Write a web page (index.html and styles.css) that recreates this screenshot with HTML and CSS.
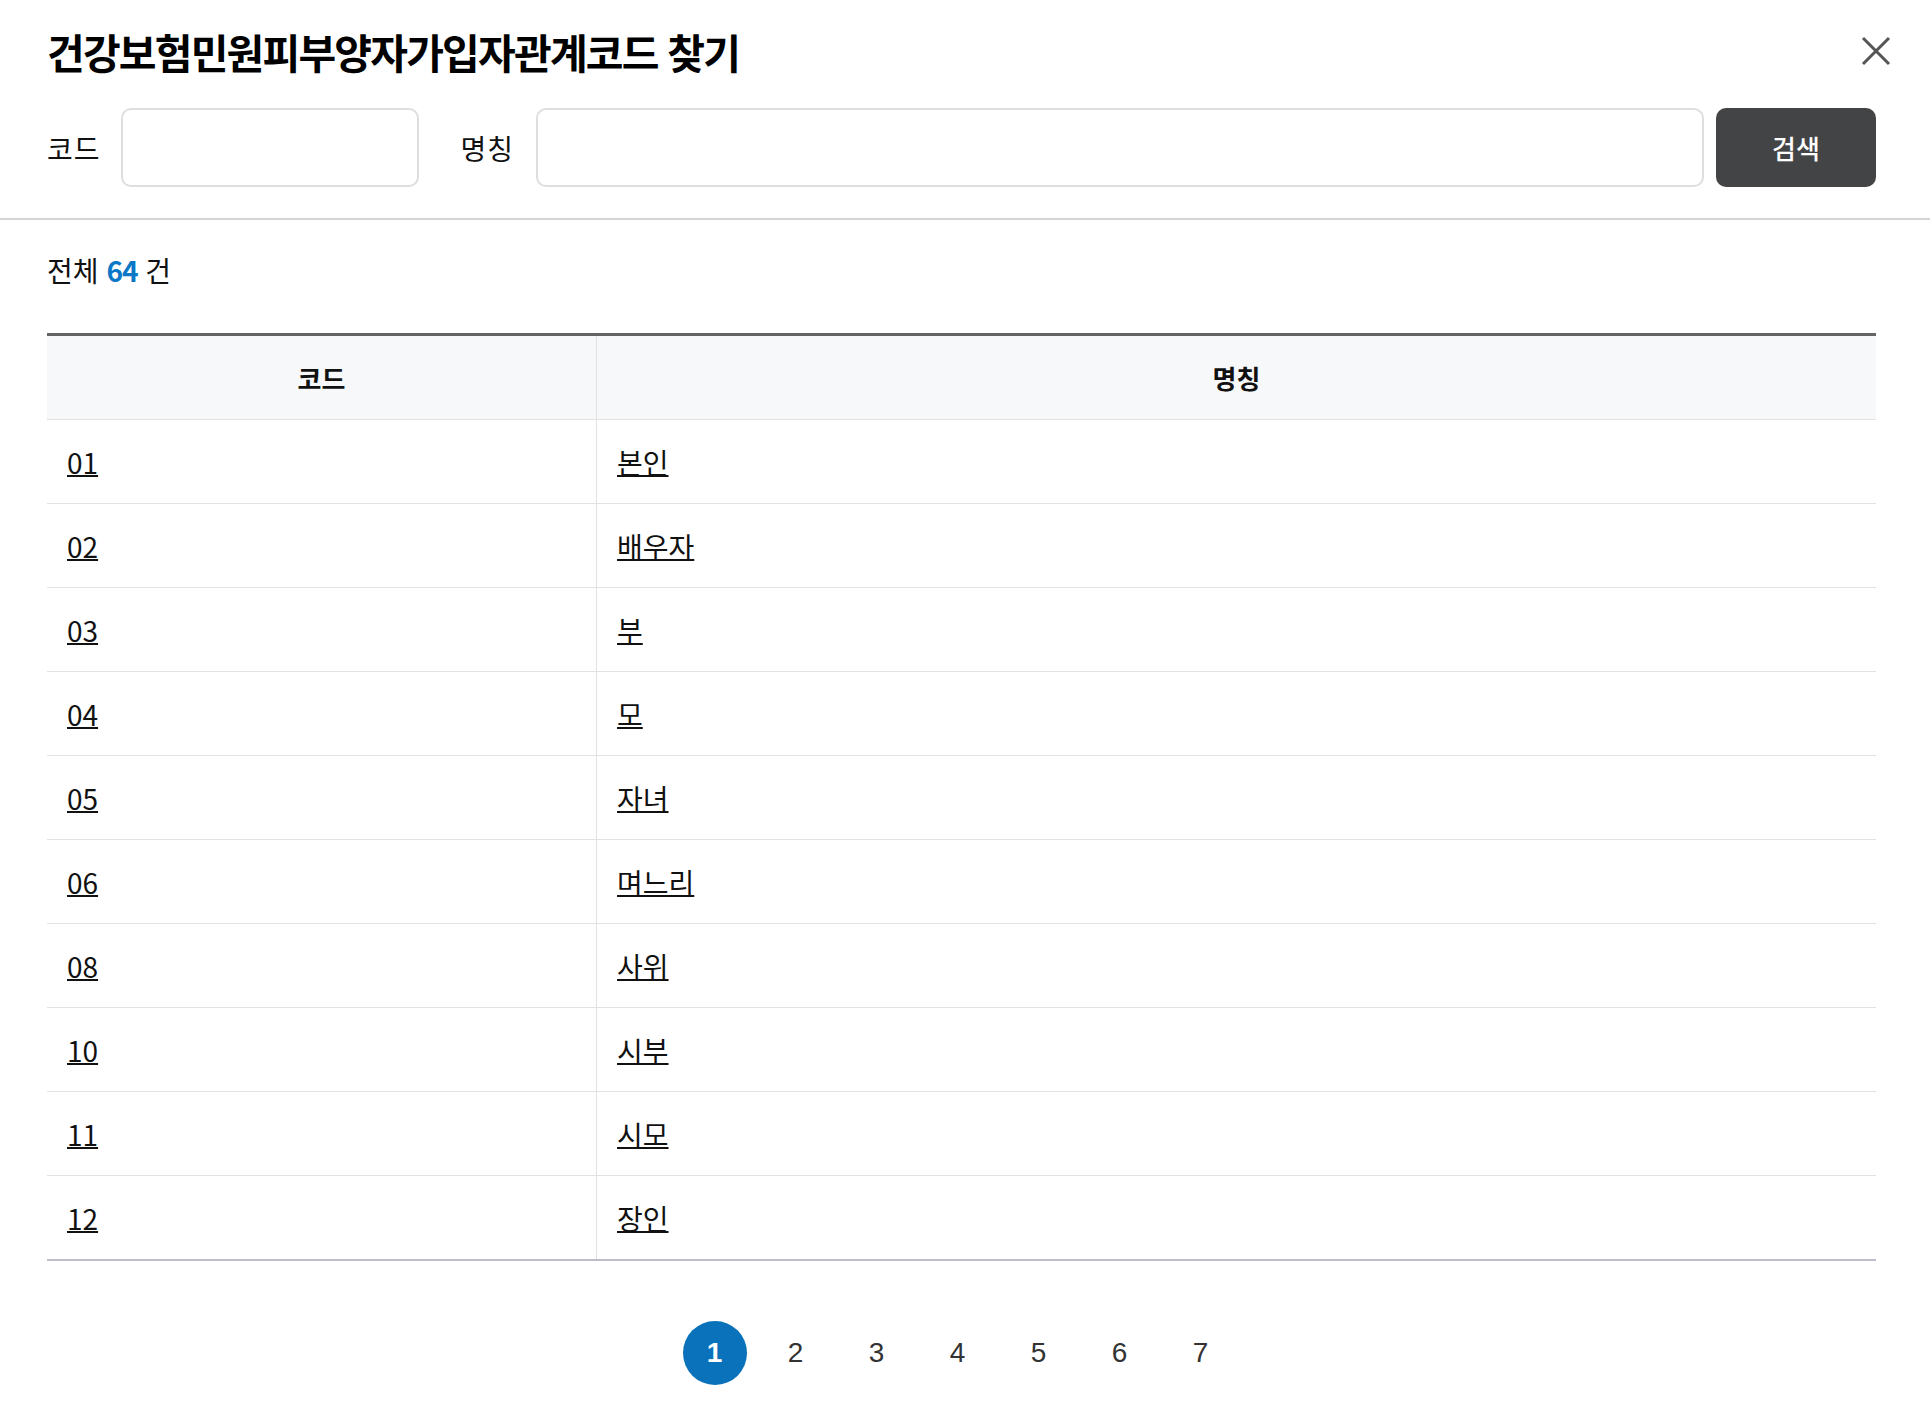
FILE: index.html
```html
<!DOCTYPE html>
<html lang="ko">
<head>
  <meta charset="UTF-8" />
  <title>건강보험민원피부양자가입자관계코드 찾기</title>
  <link rel="stylesheet" href="styles.css">
</head>
<body>

  <!-- 팝업 상단: 제목 + 검색 -->
  <div class="popup-head">
    <h1 class="popup-title">건강보험민원피부양자가입자관계코드 찾기</h1>
    <button class="close-btn" type="button" aria-label="닫기">
      <svg width="30" height="30" viewBox="0 0 30 30">
        <path d="M2 2 L28 28 M28 2 L2 28" stroke="#555" stroke-width="3" fill="none" />
      </svg>
    </button>

    <form class="search-row" onsubmit="return false;">
      <label class="search-label" for="code-input">코드</label>
      <input class="search-input code" id="code-input" type="text" />
      <label class="search-label name-label" for="name-input">명칭</label>
      <input class="search-input name" id="name-input" type="text" />
      <button class="search-btn" type="submit">검색</button>
    </form>
  </div>

  <!-- 결과 목록 -->
  <div class="popup-body">
    <p class="total">전체 <strong>64</strong> 건</p>

    <table class="code-table">
      <thead>
        <tr>
          <th class="col-code">코드</th>
          <th>명칭</th>
        </tr>
      </thead>
      <tbody id="code-list"></tbody>
    </table>

    <div class="paging">
      <a href="#" class="page on">1</a>
      <a href="#" class="page">2</a>
      <a href="#" class="page">3</a>
      <a href="#" class="page">4</a>
      <a href="#" class="page">5</a>
      <a href="#" class="page">6</a>
      <a href="#" class="page">7</a>
    </div>
  </div>

  <script>
    const codes = [
      ['01', '본인'],
      ['02', '배우자'],
      ['03', '부'],
      ['04', '모'],
      ['05', '자녀'],
      ['06', '며느리'],
      ['08', '사위'],
      ['10', '시부'],
      ['11', '시모'],
      ['12', '장인']
    ];

    const codeList = document.getElementById('code-list');

    codes.forEach(([code, name]) => {
      const tr = document.createElement('tr');
      tr.innerHTML = '<td><a href="#">' + code + '</a></td><td><a href="#">' + name + '</a></td>';
      codeList.appendChild(tr);
    });
  </script>

</body>
</html>
```

FILE: styles.css
```css
body {
  margin: 0;
  background-color: #fff;
  color: #111;
  font-family: "Noto Sans CJK KR", "Noto Sans", sans-serif;
}

.popup-head {
  position: relative;
  padding: 25px 54px 31px 47px;
  border-bottom: 2px solid #d4d4d4;
}

.popup-title {
  margin: 0;
  font-size: 41px;
  line-height: 52px;
  font-weight: 700;
  letter-spacing: -1.8px;
  color: #000;
}

/* 닫기 버튼 (우측 상단) */
.close-btn {
  position: absolute;
  top: 36px;
  right: 39px;
  width: 30px;
  height: 30px;
  padding: 0;
  border: none;
  background: transparent;
  cursor: pointer;
}

.close-btn svg {
  display: block;
}

.search-row {
  display: flex;
  align-items: center;
  margin-top: 31px;
}

.search-label {
  font-size: 28px;
  letter-spacing: 1px;
  margin-right: 20px;
}

.name-label {
  margin-left: 42px;
  margin-right: 22px;
}

.search-input {
  height: 79px;
  box-sizing: border-box;
  border: 2px solid #dedede;
  border-radius: 10px;
  font-size: 26px;
  padding: 0 16px;
  outline: none;
}

.search-input.code {
  width: 298px;
}

.search-input.name {
  flex: 1;
}

.search-btn {
  margin-left: 12px;
  width: 160px;
  height: 79px;
  border: none;
  border-radius: 10px;
  background-color: #434446;
  color: #fff;
  font-family: inherit;
  font-size: 26px;
  font-weight: 500;
  cursor: pointer;
}

.popup-body {
  padding: 0 54px 0 47px;
}

.total {
  margin: 32px 0 45px;
  font-size: 28px;
  line-height: 36px;
}

.total strong {
  color: #0a78c6;
  font-weight: 700;
  letter-spacing: -1px;
}

.code-table {
  width: 100%;
  border-collapse: collapse;
  border-top: 3px solid #646464;
  border-bottom: 2px solid #bcbdc8;
}

.code-table th,
.code-table td {
  height: 83px;
  padding: 0 20px;
  font-size: 28px;
  border-bottom: 1px solid #e2e2e2;
}

.code-table th {
  background-color: #f7f8fa;
  font-size: 26px;
  font-weight: 700;
  text-align: center;
}

.code-table td {
  text-align: left;
}

.code-table th:first-child,
.code-table td:first-child {
  width: 509px;
  border-right: 1px solid #e2e2e2;
}

.code-table td a {
  color: #111;
  text-decoration: underline;
  text-decoration-thickness: 2px;
}

.paging {
  display: flex;
  justify-content: center;
  gap: 17px;
  margin-top: 60px;
  padding-right: 8px;
}

.page {
  width: 64px;
  height: 64px;
  line-height: 64px;
  text-align: center;
  border-radius: 50%;
  font-family: "Liberation Sans", Arial, sans-serif;
  font-size: 28px;
  color: #333;
  text-decoration: none;
}

.page.on {
  background-color: #0a72ba;
  color: #fff;
  font-weight: 700;
}
```
